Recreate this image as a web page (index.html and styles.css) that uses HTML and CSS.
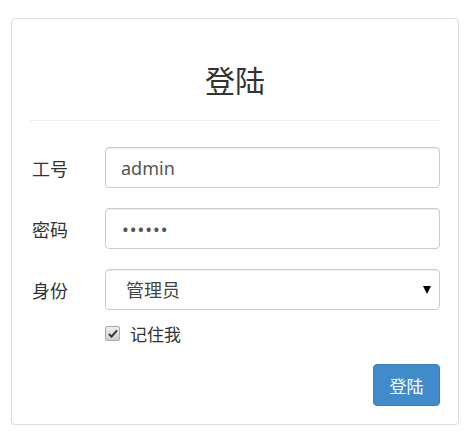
FILE: index.html
```html
<!DOCTYPE html>
<html lang="zh-CN">
<head>
  <meta charset="UTF-8">
  <meta name="viewport" content="width=device-width, initial-scale=1">
  <title>登陆</title>
  <link rel="stylesheet" href="styles.css">
</head>
<body>
  <div class="page">
    <div class="login-box">
      <h2 class="title">登陆</h2>
      <form class="login-form">
        <div class="row">
          <label class="row-label" for="uid">工号</label>
          <input class="field" id="uid" type="text" value="admin">
        </div>
        <div class="row">
          <label class="row-label" for="pwd">密码</label>
          <input class="field pwd" id="pwd" type="password" value="123456">
        </div>
        <div class="row">
          <label class="row-label" for="role">身份</label>
          <div class="select-wrap">
            <select class="field select" id="role">
              <option>管理员</option>
              <option>教师</option>
              <option>学生</option>
            </select>
          </div>
        </div>
        <label class="remember">
          <span class="check-box">
            <svg width="10" height="9" viewBox="0 0 10 9"><path d="M1 5 L3.6 7.6 L9 1.4" fill="none" stroke="#333" stroke-width="2"/></svg>
          </span>
          记住我
        </label>
        <div class="actions">
          <button class="btn-login" type="button">登陆</button>
        </div>
      </form>
    </div>
  </div>
</body>
</html>
```

FILE: styles.css
```css
body {
  margin: 0;
  background: #fff;
  font-family: "Noto Sans", "Noto Sans CJK SC", sans-serif;
  color: #333;
}
.page {
  padding: 18px 8px 0 11px;
}
.login-box {
  width: 448px;
  box-sizing: border-box;
  border: 1px solid #ddd;
  border-radius: 4px;
  box-shadow: 0 1px 2px rgba(0, 0, 0, 0.06);
  padding: 45px 18px 18px;
}
.title {
  margin: 0;
  font-size: 30px;
  font-weight: normal;
  line-height: 33px;
  text-align: center;
  color: #333;
  padding-bottom: 23px;
  border-bottom: 1px solid #eee;
}
.login-form {
  padding-top: 26px;
}
.row {
  display: flex;
  align-items: center;
  margin-bottom: 20px;
}
.row:nth-child(3) {
  margin-bottom: 0;
}
.row-label {
  width: 75px;
  flex: none;
  font-size: 18px;
  padding-left: 2px;
  box-sizing: border-box;
}
.field {
  flex: 1;
  height: 41px;
  box-sizing: border-box;
  border: 1px solid #ccc;
  border-radius: 4px;
  box-shadow: inset 0 1px 1px rgba(0, 0, 0, 0.075);
  padding: 0 15px;
  font-family: "Noto Sans", "Noto Sans CJK SC", sans-serif;
  font-size: 18px;
  color: #555;
  background: #fff;
  width: 100%;
}
.pwd {
  letter-spacing: 1px;
  padding-left: 16px;
}
.select-wrap {
  flex: 1;
  position: relative;
}
.select-wrap::after {
  content: "";
  position: absolute;
  right: 9px;
  top: 17px;
  border-left: 4px solid transparent;
  border-right: 4px solid transparent;
  border-top: 8px solid #000;
}
.select {
  display: block;
  -webkit-appearance: none;
  appearance: none;
  padding-left: 20px;
  color: #444;
}
.remember {
  display: flex;
  align-items: center;
  margin: 13px 0 0 75px;
  height: 20px;
  font-size: 17px;
}
.check-box {
  width: 13px;
  height: 13px;
  margin-right: 10px;
  border: 1px solid #aaa;
  border-radius: 2px;
  background: linear-gradient(#eee, #cfcfcf);
  display: flex;
  align-items: center;
  justify-content: center;
}
.actions {
  display: flex;
  justify-content: flex-end;
  margin-top: 21px;
}
.btn-login {
  width: 67px;
  height: 42px;
  border: 1px solid #3a7fbd;
  border-radius: 4px;
  background: #428bca;
  color: #fff;
  font-family: "Noto Sans", "Noto Sans CJK SC", sans-serif;
  font-size: 17px;
  padding: 0;
}
```
